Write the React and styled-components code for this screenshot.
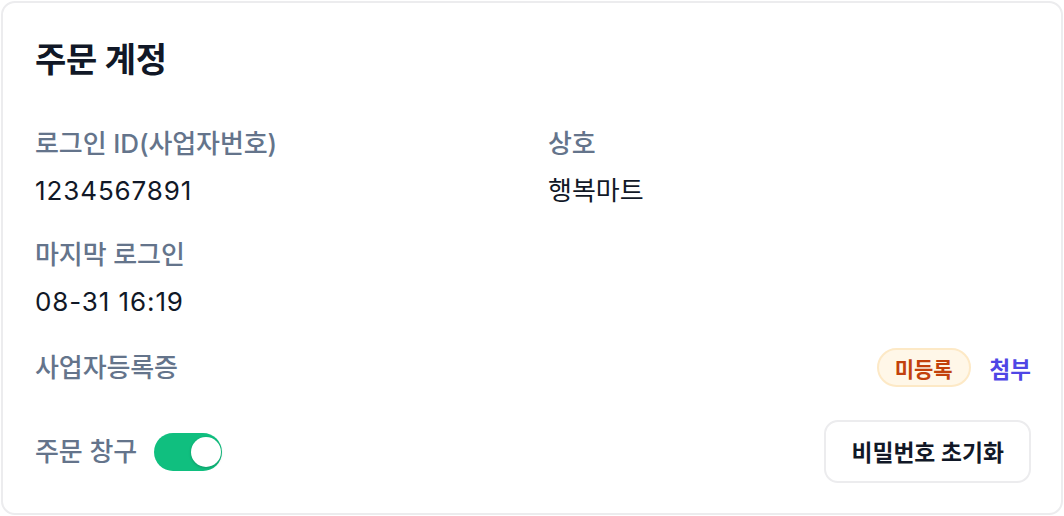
import React from "react";
import styled, { createGlobalStyle } from "styled-components";

const Global = createGlobalStyle`
  html, body { margin: 0; padding: 0; background: #ffffff; }
  body { font-family: Inter, "Noto Sans CJK KR", sans-serif; }
  #root { padding: 1px; box-sizing: border-box; width: 1064px; height: 516px; }
`;

const Card = styled.section`
  box-sizing: border-box;
  width: 1062px;
  height: 514px;
  border: 2px solid #ececee;
  border-radius: 14px;
  background: #fff;
  padding: 35px 30px 30px 32px;
  display: flex;
  flex-direction: column;
`;

const Title = styled.h2`
  margin: 0 0 44px 0;
  font-size: 34px;
  font-weight: 700;
  color: #111827;
  line-height: 44px;
  letter-spacing: -0.3px;
`;

const Grid = styled.div`
  display: grid;
  grid-template-columns: 1fr 1fr;
  column-gap: 30px;
  row-gap: 28px;
`;

const Field = styled.div`
  display: flex;
  flex-direction: column;
  gap: 11px;
`;

const Label = styled.span`
  font-size: 26px;
  font-weight: 500;
  color: #64748b;
  line-height: 36px;
  letter-spacing: -0.1px;
  white-space: nowrap;
`;

const Value = styled.span`
  font-size: 26px;
  font-weight: 400;
  color: #111827;
  line-height: 36px;
  letter-spacing: ${(p) => (p.$numeric ? "0.9px" : "0")};
`;

const Row = styled.div`
  display: flex;
  align-items: center;
  justify-content: space-between;
  margin-top: ${(p) => p.$top}px;
`;

const Group = styled.div`
  display: flex;
  align-items: center;
  gap: ${(p) => p.$gap}px;
`;

const Badge = styled.span`
  display: inline-flex;
  align-items: center;
  box-sizing: border-box;
  height: 39px;
  padding: 0 16px;
  border-radius: 999px;
  background: #fff7e8;
  border: 2px solid #fde9c6;
  color: #c2410c;
  font-size: 21px;
  font-weight: 600;
`;

const LinkButton = styled.button`
  background: none;
  border: none;
  padding: 0;
  font-family: inherit;
  font-size: 22.5px;
  font-weight: 600;
  color: #4f46e5;
  cursor: pointer;
`;

const Switch = styled.button`
  position: relative;
  width: 68px;
  height: 38px;
  border-radius: 19px;
  border: none;
  padding: 0;
  background: #10bf7f;
  cursor: pointer;
`;

const Knob = styled.span`
  position: absolute;
  top: 4px;
  right: 1px;
  width: 30px;
  height: 30px;
  border-radius: 50%;
  background: #fff;
  box-shadow: 0 1px 3px rgba(0, 0, 0, 0.2);
`;

const OutlineButton = styled.button`
  box-sizing: border-box;
  height: 63px;
  padding: 0 25px;
  border: 2px solid #ececee;
  border-radius: 14px;
  background: #fff;
  font-family: inherit;
  font-size: 22.8px;
  font-weight: 600;
  color: #111827;
  cursor: pointer;
`;

export default function App() {
  return (
    <>
      <Global />
      <Card>
        <Title>주문 계정</Title>
        <Grid>
          <Field>
            <Label>로그인 ID(사업자번호)</Label>
            <Value $numeric>1234567891</Value>
          </Field>
          <Field>
            <Label>상호</Label>
            <Value>행복마트</Value>
          </Field>
          <Field>
            <Label>마지막 로그인</Label>
            <Value $numeric>08-31 16:19</Value>
          </Field>
        </Grid>
        <Row $top={28}>
          <Label>사업자등록증</Label>
          <Group $gap={19}>
            <Badge>미등록</Badge>
            <LinkButton>첨부</LinkButton>
          </Group>
        </Row>
        <Row $top={33}>
          <Group $gap={17}>
            <Label>주문 창구</Label>
            <Switch aria-checked="true" role="switch">
              <Knob />
            </Switch>
          </Group>
          <OutlineButton>비밀번호 초기화</OutlineButton>
        </Row>
      </Card>
    </>
  );
}
